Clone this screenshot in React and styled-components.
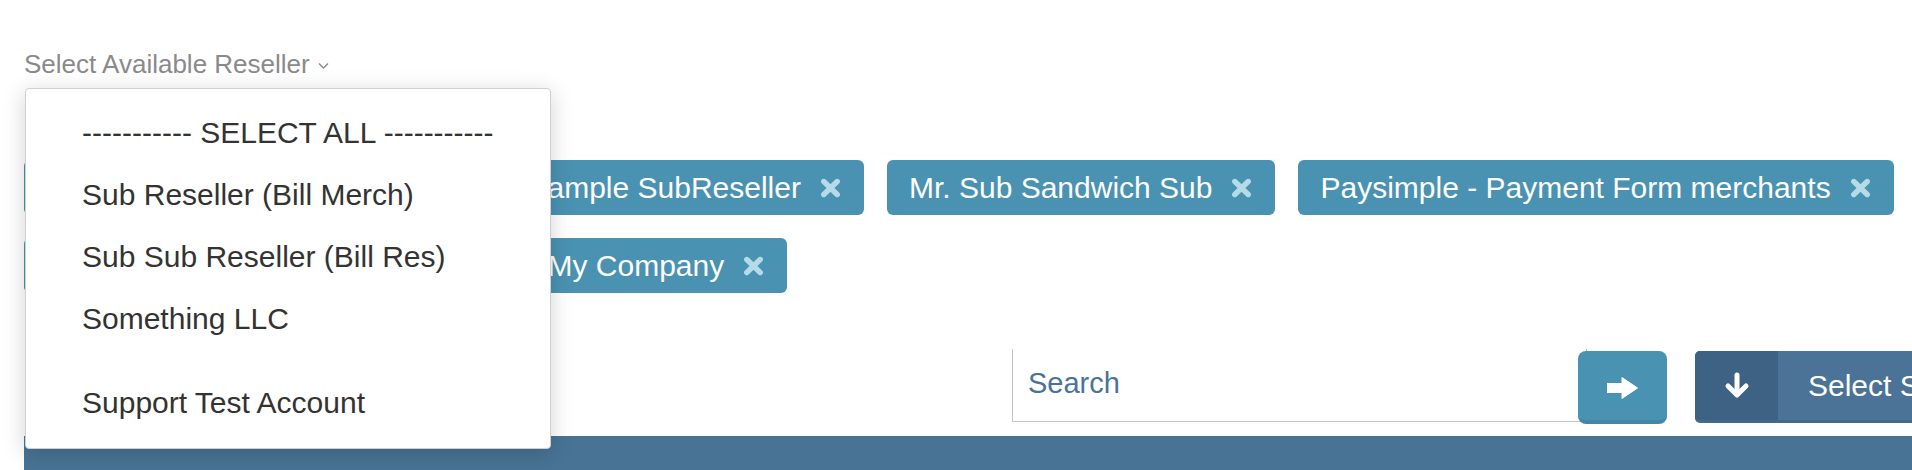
import React from 'react'
import styled, { createGlobalStyle } from 'styled-components';

const GlobalStyle = createGlobalStyle`
    html, body {
        margin: 0;
        padding: 0;
        background: #fff;
        overflow: hidden;
    }
    body {
        font-family: "Liberation Sans", Arial, Helvetica, sans-serif;
        width: 1912px;
        height: 470px;
    }
`;

const tags = [
    { text: 'Demo Reseller Companies' },
    { text: 'Example SubReseller' },
    { text: 'Mr. Sub Sandwich Sub' },
    { text: 'Paysimple - Payment Form merchants' },
    { text: 'Demo Reseller Company Ltd.' },
    { text: 'My Company' },
];

const options = [
    { text: '----------- SELECT ALL -----------' },
    { text: 'Sub Reseller (Bill Merch)' },
    { text: 'Sub Sub Reseller (Bill Res)' },
    { text: 'Something LLC' },
    { text: 'Support Test Account', spaced: true },
];

function CloseIcon() {
    return (
        <svg width="21" height="20" viewBox="0 0 21 20">
            <path d="M3.8 3.5 L17.2 16.5 M17.2 3.5 L3.8 16.5" stroke="#b5dbe9" strokeWidth="5.4" strokeLinecap="round" fill="none" />
        </svg>
    )
}

function ArrowRight() {
    return (
        <svg width="31" height="22" viewBox="0 0 31 22">
            <path d="M0 6.5 H15 V0.5 L30.5 11 L15 21.5 V15.5 H0 Z" fill="#fff" strokeLinejoin="round" stroke="#fff" strokeWidth="1" />
        </svg>
    )
}

function ArrowDown() {
    return (
        <svg width="26" height="27" viewBox="0 0 26 27">
            <path d="M13 3 V22" stroke="#fff" strokeWidth="5" strokeLinecap="round" fill="none" />
            <path d="M4 14 L13 23 L22 14" stroke="#fff" strokeWidth="5" strokeLinecap="round" strokeLinejoin="round" fill="none" />
        </svg>
    )
}

function App() {
  return (
    <Page>
        <GlobalStyle />
        <Picker>
            <PickerLabel>
                Select Available Reseller
                <svg width="11" height="8" viewBox="0 0 11 8">
                    <path d="M1 1.5 L5.5 6 L10 1.5" stroke="#8a8a8a" strokeWidth="1.4" fill="none" />
                </svg>
            </PickerLabel>
            <Menu>
                {options.map((o) => (
                    <MenuItem key={o.text} $spaced={o.spaced}>{o.text}</MenuItem>
                ))}
            </Menu>
        </Picker>

        <SectionLabel>Current Resellers</SectionLabel>

        <TagList>
            {tags.map((t) => (
                <Tag key={t.text}>
                    <span>{t.text}</span>
                    <CloseIcon />
                </Tag>
            ))}
        </TagList>

        <Toolbar>
            <SearchGroup>
                <SearchInput placeholder='Search' />
                <GoButton><ArrowRight /></GoButton>
            </SearchGroup>
            <SelectButton>
                <SelectIcon><ArrowDown /></SelectIcon>
                <SelectText>Select Sub Reseller</SelectText>
            </SelectButton>
        </Toolbar>

        <Bar />
    </Page>
  )
}

const Page = styled.div`
    padding-left: 24px;
    padding-top: 49px;
    width: 1888px;
    display: flex;
    flex-direction: column;
`;

const Picker = styled.div`
    position: relative;
    z-index: 5;
    align-self: flex-start;
`;

const PickerLabel = styled.div`
    display: flex;
    align-items: center;
    gap: 8px;
    font-size: 26px;
    line-height: 30px;
    color: #8a8a8a;
    white-space: nowrap;

    svg {
        margin-top: 3px;
    }
`;

const Menu = styled.div`
    position: absolute;
    top: calc(100% + 9px);
    left: 1px;
    width: 524px;
    padding: 13px 0 14px;
    background: #fff;
    border: 1px solid #cfcfcf;
    border-radius: 4px;
    box-shadow: 0 4px 22px rgba(0, 0, 0, 0.18);
`;

const MenuItem = styled.div`
    height: 62px;
    line-height: 62px;
    padding-left: 56px;
    font-size: 30px;
    color: #333;
    white-space: nowrap;
    margin-top: ${(p) => (p.$spaced ? '22px' : '0')};
`;

const SectionLabel = styled.div`
    margin-top: 27px;
    font-size: 26px;
    line-height: 30px;
    color: #333;
`;

const TagList = styled.div`
    margin-top: 24px;
    display: flex;
    flex-wrap: wrap;
    gap: 23px 23px;
`;

const Tag = styled.div`
    height: 55px;
    box-sizing: border-box;
    display: flex;
    align-items: center;
    gap: 19px;
    padding: 0 23px 0 22px;
    background: #4a92b2;
    border-radius: 6px;
    color: #fff;
    font-size: 30px;
    white-space: nowrap;

    svg {
        flex: none;
    }
`;

const Toolbar = styled.div`
    margin-top: 56px;
    display: flex;
    align-items: flex-start;
    margin-left: 988px;
    white-space: nowrap;
`;

const SearchGroup = styled.div`
    flex: none;
    display: flex;
    align-items: flex-start;
`;

const SearchInput = styled.input`
    width: 575px;
    height: 73px;
    box-sizing: border-box;
    border: 1px solid #c4c4c4;
    border-top: none;
    outline: none;
    padding: 0 15px 4px;
    font-family: "Liberation Sans", Arial, sans-serif;
    font-size: 29px;
    color: #4b7399;
    background: #fff;

    &::placeholder {
        color: #4b7399;
        opacity: 1;
    }
`;

const GoButton = styled.button`
    flex: none;
    margin-left: -9px;
    margin-top: 2px;
    width: 89px;
    height: 73px;
    box-sizing: border-box;
    border: none;
    border-bottom: 4px solid #4387a6;
    border-radius: 8px;
    background: #4a92b2;
    display: flex;
    align-items: center;
    justify-content: center;
    padding: 4px 0 0;
    cursor: pointer;
`;

const SelectButton = styled.div`
    flex: none;
    margin-left: 28px;
    margin-top: 2px;
    height: 72px;
    box-sizing: border-box;
    display: flex;
    border-radius: 5px 0 0 5px;
    overflow: hidden;
    background: #4a7397;
    border-bottom: 3px solid #436a8c;
`;

const SelectIcon = styled.div`
    flex: none;
    width: 83px;
    background: #3e6283;
    display: flex;
    align-items: center;
    justify-content: center;
`;

const SelectText = styled.div`
    flex: none;
    padding: 0 40px 0 30px;
    display: flex;
    align-items: center;
    font-size: 30px;
    color: #fff;
`;

const Bar = styled.div`
    margin-top: 12px;
    height: 40px;
    background: #487395;
`;

export default App
